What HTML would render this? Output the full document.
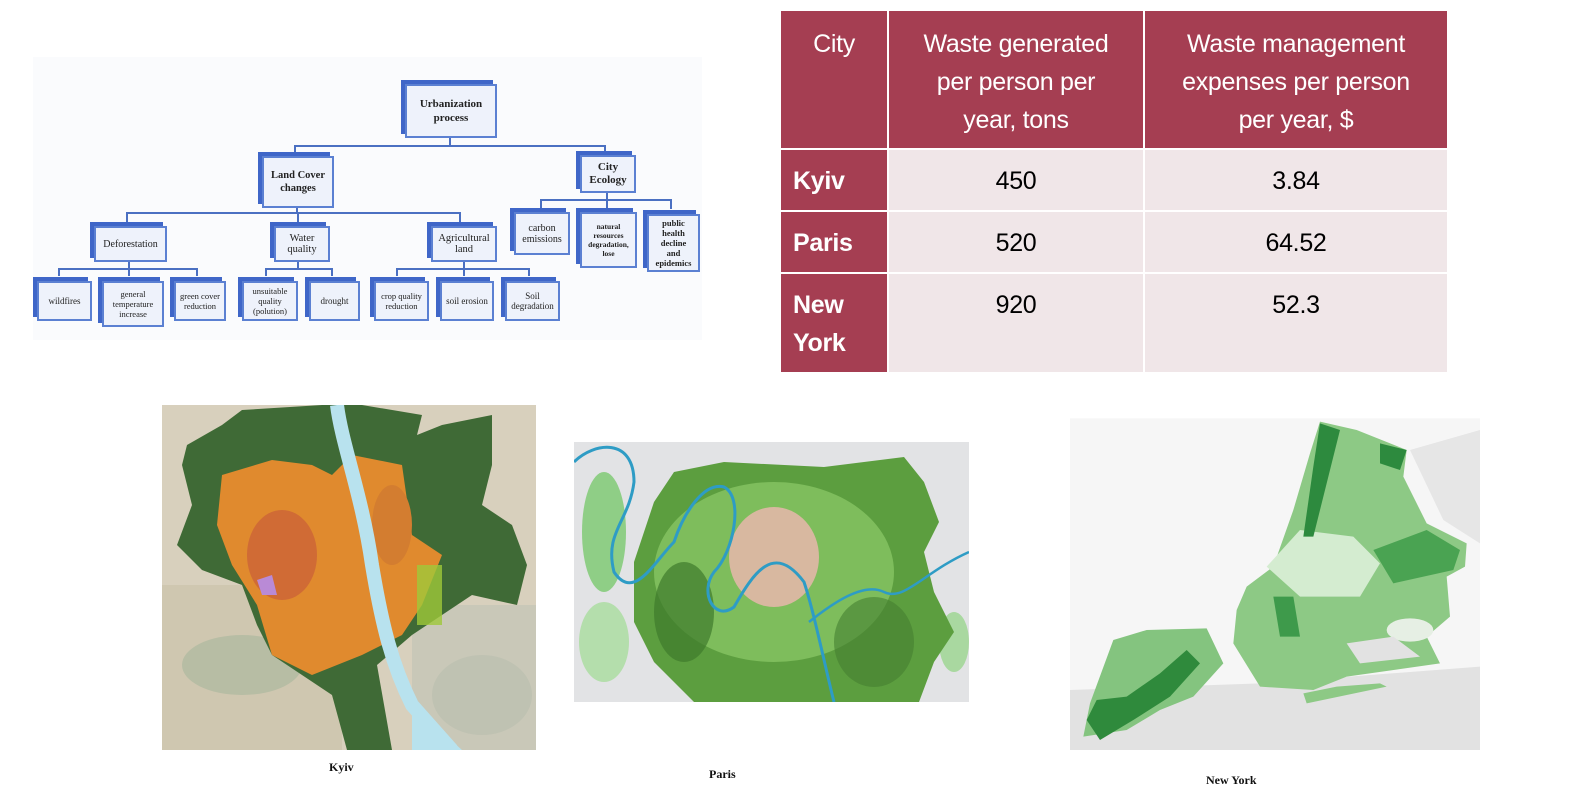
<!DOCTYPE html>
<html><head><meta charset="utf-8"><style>
*{margin:0;padding:0;box-sizing:border-box}
body{width:1572px;height:804px;background:#fff;position:relative;overflow:hidden;font-family:"Liberation Sans",sans-serif}
.a{position:absolute}
.bx{position:absolute;background:#eef2fb;border:2px solid #5b80d2;box-shadow:-4px -4px 0 #3f66c8;font-family:"Liberation Serif",serif;font-size:10px;line-height:11px;color:#222;display:flex;align-items:center;justify-content:center;text-align:center}
.b{font-weight:bold}
.ln{position:absolute;background:#4b70c2}
table{position:absolute;left:779px;top:9px;border-collapse:collapse;letter-spacing:-0.3px}
th{background:#a53e52;color:#fff;font-weight:normal;font-size:25px;line-height:38px;vertical-align:top;padding-top:14px;border:2px solid #fff}
td{border:2px solid #fff}
.c{background:#a53e52;color:#fff;font-weight:bold;font-size:25px;line-height:38px;padding-left:12px;vertical-align:top;padding-top:12px}
.v{background:#f0e6e8;color:#000;font-size:25px;line-height:38px;text-align:center;vertical-align:top;padding-top:12px}
.lab{position:absolute;font-family:"Liberation Serif",serif;font-weight:bold;font-size:12px;color:#111}
</style></head><body>

<div class="a" style="left:33px;top:57px;width:669px;height:283px;background:#fafbfd"></div>
<div class="ln" style="left:449px;top:137px;width:2px;height:9px"></div>
<div class="ln" style="left:294px;top:145px;width:312px;height:2px"></div>
<div class="ln" style="left:294px;top:145px;width:2px;height:8px"></div>
<div class="ln" style="left:604px;top:145px;width:2px;height:9px"></div>
<div class="ln" style="left:296px;top:207px;width:2px;height:6px"></div>
<div class="ln" style="left:126px;top:212px;width:335px;height:2px"></div>
<div class="ln" style="left:126px;top:212px;width:2px;height:10px"></div>
<div class="ln" style="left:297px;top:212px;width:2px;height:10px"></div>
<div class="ln" style="left:459px;top:212px;width:2px;height:10px"></div>
<div class="ln" style="left:540px;top:199px;width:132px;height:2px"></div>
<div class="ln" style="left:540px;top:199px;width:2px;height:10px"></div>
<div class="ln" style="left:606px;top:192px;width:2px;height:16px"></div>
<div class="ln" style="left:670px;top:199px;width:2px;height:10px"></div>
<div class="ln" style="left:58px;top:268px;width:140px;height:2px"></div>
<div class="ln" style="left:58px;top:268px;width:2px;height:8px"></div>
<div class="ln" style="left:128px;top:262px;width:2px;height:14px"></div>
<div class="ln" style="left:196px;top:268px;width:2px;height:8px"></div>
<div class="ln" style="left:265px;top:268px;width:68px;height:2px"></div>
<div class="ln" style="left:265px;top:268px;width:2px;height:8px"></div>
<div class="ln" style="left:331px;top:268px;width:2px;height:8px"></div>
<div class="ln" style="left:297px;top:262px;width:2px;height:7px"></div>
<div class="ln" style="left:396px;top:268px;width:134px;height:2px"></div>
<div class="ln" style="left:396px;top:268px;width:2px;height:8px"></div>
<div class="ln" style="left:463px;top:262px;width:2px;height:14px"></div>
<div class="ln" style="left:528px;top:268px;width:2px;height:8px"></div>

<div class="bx b" style="left:405px;top:84px;width:92px;height:54px;font-size:11px;line-height:14px">Urbanization<br>process</div>
<div class="bx b" style="left:262px;top:156px;width:72px;height:52px;font-size:10.5px;line-height:13px">Land Cover<br>changes</div>
<div class="bx b" style="left:580px;top:155px;width:56px;height:38px;font-size:11px;line-height:13px">City<br>Ecology</div>
<div class="bx" style="left:94px;top:226px;width:73px;height:36px">Deforestation</div>
<div class="bx" style="left:274px;top:226px;width:56px;height:36px;font-size:10.5px">Water<br>quality</div>
<div class="bx" style="left:431px;top:226px;width:66px;height:36px;font-size:10.5px">Agricultural<br>land</div>
<div class="bx" style="left:514px;top:212px;width:56px;height:43px">carbon<br>emissions</div>
<div class="bx b" style="left:580px;top:212px;width:57px;height:56px;font-size:7.5px;line-height:9px">natural<br>resources<br>degradation,<br>lose</div>
<div class="bx b" style="left:647px;top:214px;width:53px;height:58px;font-size:8.5px;line-height:10px">public<br>health<br>decline<br>and<br>epidemics</div>
<div class="bx" style="left:37px;top:281px;width:55px;height:40px;font-size:9px">wildfires</div>
<div class="bx" style="left:102px;top:281px;width:62px;height:46px;font-size:8.5px;line-height:10px">general<br>temperature<br>increase</div>
<div class="bx" style="left:174px;top:281px;width:52px;height:40px;font-size:8.5px;line-height:10px">green cover<br>reduction</div>
<div class="bx" style="left:242px;top:281px;width:56px;height:40px;font-size:8.5px;line-height:10px">unsuitable<br>quality<br>(polution)</div>
<div class="bx" style="left:309px;top:281px;width:51px;height:40px;font-size:9px">drought</div>
<div class="bx" style="left:374px;top:281px;width:55px;height:40px;font-size:8.5px;line-height:10px">crop quality<br>reduction</div>
<div class="bx" style="left:440px;top:281px;width:54px;height:40px;font-size:9px">soil erosion</div>
<div class="bx" style="left:505px;top:281px;width:55px;height:40px;font-size:9px;line-height:10px">Soil<br>degradation</div>

<table>
<tr style="height:139px"><th style="width:108px">City</th><th style="width:256px">Waste generated<br>per person per<br>year, tons</th><th style="width:304px">Waste management<br>expenses per person<br>per year, $</th></tr>
<tr style="height:62px"><td class="c">Kyiv</td><td class="v">450</td><td class="v">3.84</td></tr>
<tr style="height:62px"><td class="c">Paris</td><td class="v">520</td><td class="v">64.52</td></tr>
<tr style="height:100px"><td class="c">New<br>York</td><td class="v">920</td><td class="v">52.3</td></tr>
</table>

<svg class="a" style="left:162px;top:405px" width="374" height="345" viewBox="0 0 374 345">
<rect width="374" height="345" fill="#d8d0bd"/>
<rect x="0" y="180" width="180" height="165" fill="#cfc7b0"/>
<rect x="250" y="200" width="124" height="145" fill="#c9c8b8"/>
<ellipse cx="80" cy="260" rx="60" ry="30" fill="#b7bda4"/>
<ellipse cx="320" cy="290" rx="50" ry="40" fill="#bfc2b2"/>
<polygon fill="#3f6a36" points="25,40 60,20 80,5 160,0 200,0 260,10 255,30 280,20 330,10 330,60 320,100 350,120 365,160 355,200 310,190 280,210 250,230 215,260 230,345 185,345 170,290 140,270 110,250 95,220 80,180 40,165 15,140 30,100 20,60"/>
<polygon fill="#e08a2e" points="60,70 110,55 150,60 170,70 190,50 240,60 250,130 280,150 260,200 240,230 200,250 150,270 110,250 95,200 70,160 55,120"/>
<ellipse cx="120" cy="150" rx="35" ry="45" fill="#c4563a" opacity=".6"/>
<ellipse cx="230" cy="120" rx="20" ry="40" fill="#d37d30"/>
<polygon points="95,175 110,170 115,190 100,190" fill="#b98ad6"/>
<path d="M175,0 C180,40 200,90 210,160 C220,220 230,260 250,300 L290,345" stroke="#b8e2ee" stroke-width="14" fill="none"/>
<path d="M250,300 L300,345 L250,345 Z" fill="#b8e2ee"/>
<rect x="255" y="160" width="25" height="60" fill="#9fc83a" opacity=".8"/>
</svg>
<div class="lab" style="left:329px;top:760px">Kyiv</div>

<svg class="a" style="left:574px;top:442px" width="395" height="260" viewBox="0 0 395 260">
<rect width="395" height="260" fill="#e2e3e5"/>
<ellipse cx="30" cy="90" rx="22" ry="60" fill="#8fce86"/>
<ellipse cx="30" cy="200" rx="25" ry="40" fill="#b4deac"/>
<ellipse cx="380" cy="200" rx="15" ry="30" fill="#a9d8a0"/>
<polygon fill="#5c9e3f" points="100,30 150,20 250,25 330,15 350,40 365,80 350,110 360,150 380,190 360,220 345,260 120,260 80,220 60,180 60,120 80,60"/>
<ellipse cx="200" cy="130" rx="120" ry="90" fill="#7ebd5c"/>
<ellipse cx="200" cy="115" rx="45" ry="50" fill="#d8b8a0"/>
<ellipse cx="110" cy="170" rx="30" ry="50" fill="#3f7a2c" opacity=".7"/>
<ellipse cx="300" cy="200" rx="40" ry="45" fill="#457f30" opacity=".6"/>
<path d="M0,20 C20,0 60,-5 60,40 C55,80 30,90 40,130 C60,160 80,120 100,100 C110,70 130,40 150,45 C170,55 160,110 140,130 C125,150 140,180 160,165 C180,130 200,100 230,140 C240,170 250,220 260,260" stroke="#2e9cc5" stroke-width="3" fill="none"/>
<path d="M235,180 C260,160 290,140 310,150 C330,160 350,130 395,110" stroke="#2e9cc5" stroke-width="2.5" fill="none"/>
</svg>
<div class="lab" style="left:709px;top:767px">Paris</div>

<svg class="a" style="left:1060px;top:410px" width="420" height="380" viewBox="0 0 1260 1140">
<rect x="30" y="25" width="1230" height="995" fill="#f6f6f6"/>
<polygon fill="#e2e2e2" points="30,840 600,820 1260,770 1260,1020 30,1020"/>
<polygon fill="#e6e6e6" points="1050,120 1260,60 1260,400 1150,330"/>
<polygon fill="#84c47f" points="70,980 90,880 160,690 260,660 440,655 490,760 400,860 300,900 200,960"/>
<polygon fill="#2f8a3c" points="80,930 110,870 200,860 300,790 380,720 420,760 330,860 220,930 120,990"/>
<polygon fill="#8dc985" points="780,35 890,60 1040,120 1030,200 1100,340 1220,400 1215,470 1160,500 1170,620 1100,680 1140,760 860,800 760,840 600,830 520,700 530,600 560,530 640,470 700,300 750,130"/>
<polygon fill="#d4ecd0" points="620,470 720,360 880,380 960,460 900,560 720,560"/>
<polygon fill="#2d8a3e" points="780,40 840,60 820,140 760,380 730,380 760,170"/>
<polygon fill="#2d8a3e" points="960,100 1040,120 1020,180 960,160"/>
<polygon fill="#4aa352" points="940,420 1100,360 1200,420 1180,480 1000,520"/>
<polygon fill="#3e9a4b" points="640,560 700,560 720,680 660,680"/>
<ellipse cx="1050" cy="660" rx="70" ry="35" fill="#e6efe4"/>
<polygon fill="#e2e2e2" points="860,700 1000,680 1080,740 900,760"/>
<polygon fill="#8dc985" points="730,850 830,830 960,820 980,830 740,880"/>
</svg>
<div class="lab" style="left:1206px;top:773px">New York</div>

</body></html>
